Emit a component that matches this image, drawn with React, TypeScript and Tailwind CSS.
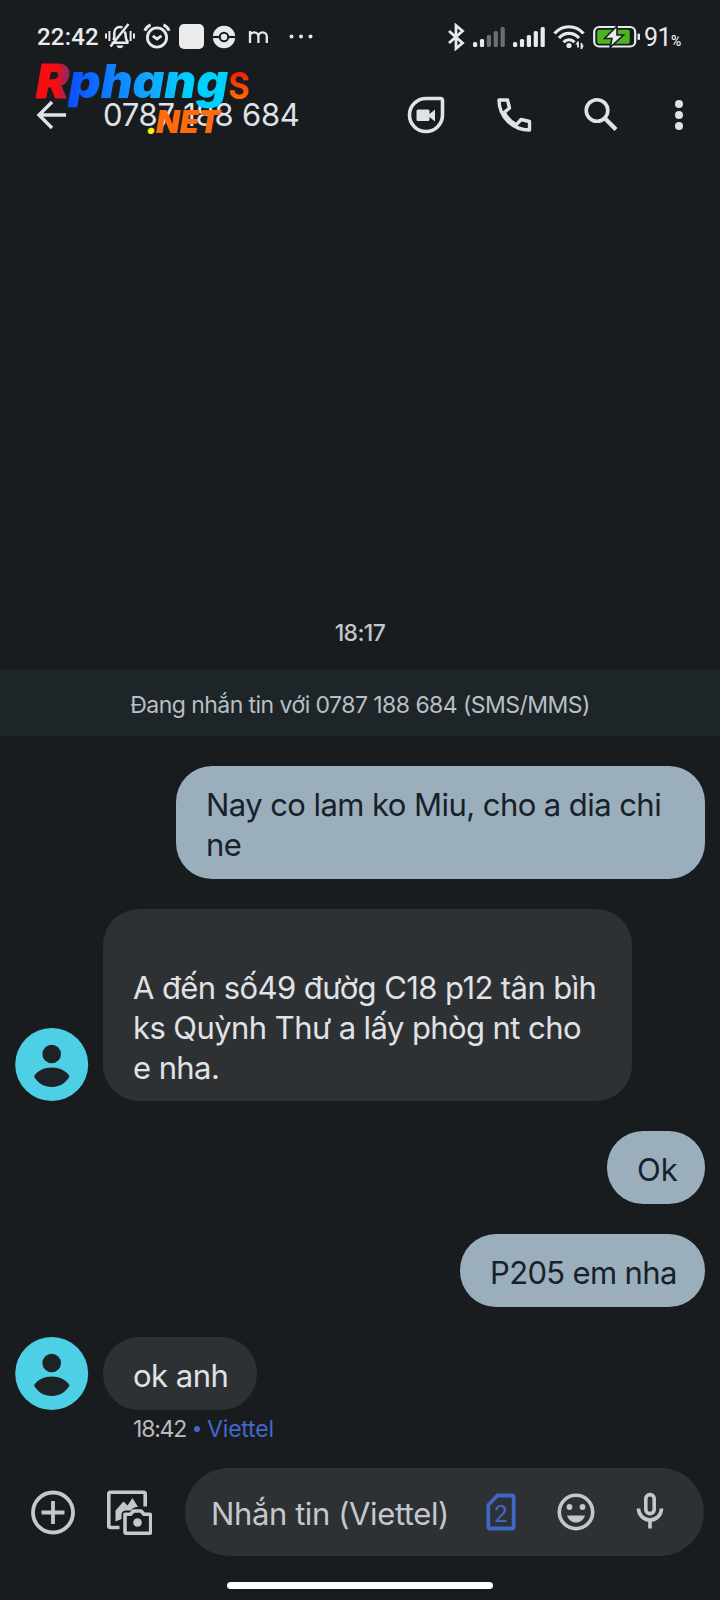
import type { ReactNode } from "react";
import clsx from "clsx";

function StatusBar() {
  return (
    <div className="flex h-[72px] items-center pl-[37px] pr-[36px] text-[#e8eaec]">
      <span className="w-[67px] whitespace-nowrap pt-0.5 font-['Roboto'] text-[24px] font-medium leading-7 tracking-[0.2px]">
        22:42
      </span>
      {/* Muted bell */}
      <svg width="32" height="28" viewBox="0 0 32 28" fill="none" stroke="currentColor" strokeWidth="2">
        <path d="M7.500 20.700h17M20.500 9.500c.9 1.200 1.200 2.500 1.200 4.500 0 3 .8 5 2.600 6.500M18.500 5.500c-.8-.4-1.600-.6-2.500-.6-3.500 0-5.700 2.800-5.700 6.100v3c0 1.500-.2 3-.9 4.200M6.500 24.500 24.500 2" strokeWidth="2.500" />
        <path d="M12.500 23.500h7c-.5 1.800-1.900 2.700-3.500 2.700s-3-.9-3.500-2.700z" fill="currentColor" stroke="none" />
        <path d="M2 11.500v5M5.400 9v10M26.600 9v10M30 11.500v5" />
      </svg>
      {/* Alarm */}
      <svg width="28" height="28" viewBox="0 0 28 28" fill="none" stroke="currentColor" strokeWidth="2.800" className="ml-[7px]">
        <circle cx="14" cy="15.500" r="9.600" />
        <path d="M1.800 8.800c1-2.700 3-4.700 5.800-5.900M26.200 8.800c-1-2.700-3-4.700-5.800-5.900M9.800 13.800l4.200 3.200 4.400-3.200" />
      </svg>
      <div className="ml-2 h-[25px] w-[25px] rounded-[5px] bg-[#ececec]" />
      {/* Ball */}
      <svg width="24" height="24" viewBox="0 0 24 24" className="ml-[8px] mt-0.5">
        <circle cx="12" cy="12" r="11.200" fill="#e8eaec" />
        <path d="M0 12h24" stroke="#191c1f" strokeWidth="2.200" />
        <circle cx="12" cy="12" r="4.200" fill="#e8eaec" stroke="#191c1f" strokeWidth="2" />
      </svg>
      <svg width="22" height="14" viewBox="0 0 22 14" fill="none" stroke="currentColor" strokeWidth="2.300" className="ml-[12px] mt-0.5">
        <path d="M2 13V1M2 6.500a4.200 4.200 0 0 1 8.400 0V13M10.400 6.500a4.200 4.200 0 0 1 8.400 0V13" />
      </svg>
      <svg width="24" height="6" viewBox="0 0 24 6" fill="currentColor" className="ml-[19px]">
        <circle cx="2.500" cy="3.500" r="2" />
        <circle cx="12" cy="3.500" r="2" />
        <circle cx="21.500" cy="3.500" r="2" />
      </svg>

      <div className="ml-auto flex items-center">
        <svg width="18" height="28" viewBox="0 0 18 28" fill="none" stroke="currentColor" strokeWidth="2.800" className="mt-0.5">
          <path d="M2 8l13.500 12L9 25.500v-23L15.500 8 2 20" />
        </svg>
        <Signal active={2} />
        <Signal active={5} />
        {/* Wifi */}
        <svg width="32" height="26" viewBox="0 0 32 26" fill="none" stroke="currentColor" strokeWidth="3.200" className="ml-[8px] mt-0.5">
          <path d="M1.500 9.500C9.500.5 22.500.5 30.500 9.500M6 14c5.500-6.300 14.500-6.300 20 0M10.500 18.300c3-3.400 8-3.400 11 0" />
          <circle cx="16" cy="21.500" r="2.600" fill="currentColor" stroke="none" />
          <path d="M25 17.500v6M28.500 19v6" strokeWidth="1.800" />
          <path d="M22.300 20.500l2.700-3.200v3.200zM31.200 21.500l-2.700 3.200v-3.200z" fill="currentColor" stroke="none" />
        </svg>
        {/* Battery */}
        <svg width="48" height="24" viewBox="0 0 48 24" className="ml-[8px] mt-0.5">
          <rect x="1.200" y="2" width="41" height="19.500" rx="5" fill="none" stroke="#e8eaec" strokeWidth="2.200" />
          <rect x="4.200" y="4.800" width="32.500" height="14" rx="2" fill="#4cb41f" />
          <rect x="44.500" y="8.500" width="2.500" height="6.500" rx="1" fill="#e8eaec" />
          <path d="M24 1 11.500 13.500H19L17 22.500 30.500 10H24z" fill="#e8eaec" stroke="#191c1f" strokeWidth="1.600" />
        </svg>
        <span className="ml-[3px] pt-[3px] font-['Roboto'] text-[25px] leading-7 tracking-[-0.5px]">91</span>
        <span className="mt-[10px] w-[13px] font-['Roboto'] text-[14px] leading-4 font-medium tracking-[-1px]">%</span>
      </div>
    </div>
  );
}

function Signal({ active }: { active: number }) {
  const heights = [5, 8, 12, 16, 20];
  return (
    <svg width="32" height="20" viewBox="0 0 32 20" className="ml-[8px] mt-0.5">
      {heights.map((h, i) => (
        <rect key={h} x={i * 6.900} y={20 - h} width="4.200" height={h} rx="1.500" fill={i < active ? "#e8eaec" : "#6b6e70"} />
      ))}
    </svg>
  );
}

function Watermark() {
  return (
    <svg width="232" height="104" viewBox="0 -12 232 104" className="pointer-events-none absolute left-[32px] top-[44px] overflow-visible">
      <defs>
        <linearGradient id="wm-r" x1="0" x2="1">
          <stop offset="0.6" stopColor="#f80d12" />
          <stop offset="1" stopColor="#703080" />
        </linearGradient>
        <linearGradient id="wm-name" x1="0" x2="1">
          <stop offset="0" stopColor="#0b4dff" />
          <stop offset="0.5" stopColor="#12a5ff" />
          <stop offset="0.75" stopColor="#00d0ff" />
        </linearGradient>
        <linearGradient id="wm-s" x1="0" y1="0" x2="0" y2="1">
          <stop offset="0.3" stopColor="#f5160c" />
          <stop offset="0.9" stopColor="#ff8000" />
        </linearGradient>
      </defs>
      <g fontFamily="Inter, sans-serif" fontWeight="900" fontStyle="italic">
        <text x="4" y="42" fontSize="47" textLength="33" lengthAdjust="spacingAndGlyphs" fill="url(#wm-r)" stroke="url(#wm-r)" strokeWidth="0.8">R</text>
        <text x="37" y="42" fontSize="47" textLength="159" lengthAdjust="spacingAndGlyphs" fill="url(#wm-name)">phang</text>
        <text x="114" y="78" fontSize="32" fill="#ffee00">.</text>
        <text x="124" y="77" fontSize="31" textLength="64" lengthAdjust="spacingAndGlyphs" fill="#ff6b0a">NET</text>
      </g>
      <text x="196" y="43" fontFamily="Roboto, sans-serif" fontSize="50" fontWeight="500" textLength="22" lengthAdjust="spacingAndGlyphs" fill="url(#wm-s)">s</text>
    </svg>
  );
}

function AppBar() {
  return (
    <header className="flex h-[86px] items-center pl-[36px] text-[#dfe2e6]">
      <svg width="32" height="32" viewBox="0 0 32 32" fill="none" stroke="currentColor" strokeWidth="3.400" className="-mt-px">
        <path d="M30 16H3.500M16 3 3 16l13 13" />
      </svg>
      <h1 className="ml-[35px] w-[302px] whitespace-nowrap text-[31px] leading-10 tracking-[-0.25px]">0787 188 684</h1>
      <svg width="40" height="40" viewBox="0 0 40 40" className="-mt-px ml-px">
        <path d="M20 3.500h14.500q2 0 2 2V20A16.500 16.500 0 1 1 20 3.500z" fill="none" stroke="currentColor" strokeWidth="3.600" />
        <path d="M12 14.500h10q1.500 0 1.500 1.500v3l5.500-4.500v12l-5.500-4.500v2.500q0 1.500-1.500 1.500H12q-1.500 0-1.500-1.500V16q0-1.500 1.500-1.500z" fill="currentColor" />
      </svg>
      <svg width="36" height="36" viewBox="0 0 36 36" fill="none" stroke="currentColor" strokeWidth="3.400" strokeLinejoin="round" className="ml-[50px]">
        <path d="M3 3h8.500l2 8-5.300 4.500c2.600 5.200 6.800 9.400 12.200 12.200l4.700-5.200 8.400 2V33C16.500 33 3 19.500 3 3z" />
      </svg>
      <svg width="36" height="36" viewBox="0 0 36 36" fill="none" stroke="currentColor" strokeWidth="3.600" className="-mt-0.5 ml-[51px]">
        <circle cx="14" cy="14.500" r="10.800" />
        <path d="M21.500 22 33 33.500" strokeWidth="4.200" />
      </svg>
      <svg width="8" height="32" viewBox="0 0 8 32" fill="currentColor" className="ml-[56px]">
        <circle cx="4" cy="5" r="4" />
        <circle cx="4" cy="16" r="4" />
        <circle cx="4" cy="27" r="4" />
      </svg>
    </header>
  );
}

function Avatar() {
  return (
    <svg width="74" height="74" viewBox="0 0 74 74" className="-mt-px shrink-0">
      <circle cx="36.700" cy="37.500" r="36.500" fill="#4dd0e6" />
      <g fill="#1d2226">
        <circle cx="36.700" cy="27" r="9.300" />
        <path d="M19 49.500C22.500 43.300 29.300 40.500 36.700 40.500s14.300 2.800 17.800 9C50.500 56.500 44 60 36.700 60S23 56.500 19 49.500z" />
      </g>
    </svg>
  );
}

function Bubble({ mine, className, children }: { mine?: boolean; className?: string; children: ReactNode }) {
  return (
    <div
      className={clsx(
        "whitespace-pre rounded-[36px] pl-[30px] pt-[19px] text-[31px] leading-10",
        mine ? "bg-[#9baebc] text-[#17212a]" : "bg-[#2d3134] text-[#e0e2e5]",
        className,
      )}
    >
      {children}
    </div>
  );
}

function Composer() {
  return (
    <footer className="mt-[24px] flex h-[88px] items-center pl-[30px] pr-4 text-[#c4c8cd]">
      <svg width="46" height="46" viewBox="0 0 46 46" fill="none" stroke="currentColor" strokeWidth="3.800">
        <circle cx="23" cy="23.500" r="20" />
        <path d="M11.500 23.500h23M23 12v23" />
      </svg>
      {/* Gallery and camera */}
      <svg width="46" height="46" viewBox="0 0 46 46" fill="none" stroke="currentColor" strokeWidth="3.600" strokeLinejoin="round" className="ml-[30px]">
        <path d="M13.500 38.500H4.500Q2.800 38.500 2.800 37V5Q2.800 3.300 4.500 3.300h33q1.700 0 1.700 1.700V17.500" />
        <path d="M9.500 32.500V21.500l8-9 4 4 5-7.500 5.500 9c-3.500.3-5 .8-7 3.500h-5c-3 0-4.500 1.500-4.500 4.500v4z" fill="currentColor" stroke="none" />
        <path d="M19 25.300h5.500l3-3.300h7.500l3 3.300h5.500q1.200 0 1.200 1.200V43q0 1.200-1.200 1.200H20.200Q19 44.200 19 43z" />
        <circle cx="31.500" cy="33.500" r="4.300" fill="currentColor" stroke="none" />
      </svg>
      <div className="ml-[33px] flex h-[88px] w-[519px] items-center rounded-full bg-[#2d3134] pl-[26px]">
        <span className="w-[274px] whitespace-nowrap pt-[3px] text-[31px] leading-10 tracking-[-0.4px]">Nhắn tin (Viettel)</span>
        <svg width="32" height="40" viewBox="0 0 32 40">
          <path d="M12.500 3.500H27q1.700 0 1.700 1.700v29.600q0 1.700-1.700 1.700H5q-1.700 0-1.700-1.700V13z" fill="none" stroke="#3f68c4" strokeWidth="3.800" strokeLinejoin="round" />
          <text x="16" y="29.500" textAnchor="middle" fontFamily="Roboto, sans-serif" fontSize="24" fill="#3f68c4">2</text>
        </svg>
        <svg width="40" height="40" viewBox="0 0 40 40" className="ml-[39px]">
          <circle cx="20" cy="20" r="16.700" fill="none" stroke="currentColor" strokeWidth="3.600" />
          <circle cx="13.500" cy="15" r="2.900" fill="currentColor" />
          <circle cx="26.500" cy="15" r="2.900" fill="currentColor" />
          <path d="M11 23.500h18c-1.500 4.500-5 7-9 7s-7.500-2.500-9-7z" fill="currentColor" />
        </svg>
        <svg width="28" height="40" viewBox="0 0 28 40" fill="none" stroke="currentColor" strokeWidth="3.600" className="-mt-1 ml-[40px]">
          <rect x="9.800" y="4.600" width="8.400" height="19" rx="4.200" />
          <path d="M2.500 18.500a11.500 11.500 0 0 0 23 0M14 30v8.500" />
        </svg>
      </div>
    </footer>
  );
}

export default function App() {
  return (
    <div className="relative flex h-[1600px] w-[720px] flex-col overflow-hidden bg-[#191c1f] font-['Inter','Roboto',sans-serif]">
      <StatusBar />
      <AppBar />
      <Watermark />

      <main className="mt-[459px] flex flex-col">
        <time className="text-center text-[23px] font-medium leading-8 tracking-[-0.6px] text-[#c2c5c9]">18:17</time>
        <div className="mt-[21px] flex h-[66px] items-center justify-center bg-[#1e2528] pt-[5px] text-[23px] tracking-[-0.55px] text-[#b9bfc4]">
          Đang nhắn tin với 0787 188 684 (SMS/MMS)
        </div>

        <div className="mt-[30px] flex flex-col gap-[29.5px] pl-[15px] pr-[15px]">
          <Bubble mine className="h-[113px] w-[529px] self-end tracking-[-0.56px]">
            {"Nay co lam ko Miu, cho a dia chi\nne"}
          </Bubble>

          <div className="flex h-[192.5px] items-end gap-[14px]">
            <Avatar />
            <Bubble className="h-full w-[529px] pt-[18px] tracking-[-0.58px]">
              {"\nA đến số49 đườg C18 p12 tân bìh\nks Quỳnh Thư a lấy phòg nt cho\ne nha."}
            </Bubble>
          </div>

          <Bubble mine className="h-[73.5px] w-[98px] self-end">Ok</Bubble>
          <Bubble mine className="h-[73.5px] w-[245px] self-end tracking-[-0.65px]">P205 em nha</Bubble>

          <div className="flex h-[73.5px] items-end gap-[14px]">
            <Avatar />
            <Bubble className="h-full w-[154px] tracking-[-0.5px]">ok anh</Bubble>
          </div>
        </div>

        <p className="mt-[4px] flex h-[30px] items-center whitespace-nowrap pl-[133px] text-[23px] tracking-[-1.2px] text-[#b9bdc1]">
          18:42
          <span className="ml-[8px] mr-[7px] h-[6px] w-[6px] rounded-full bg-[#4169c6]" />
          <span className="tracking-[-0.2px] text-[#4169c6]">Viettel</span>
        </p>
      </main>

      <Composer />
      <div className="mx-auto mt-[26px] h-[7px] w-[266px] shrink-0 rounded-full bg-white" />
    </div>
  );
}
